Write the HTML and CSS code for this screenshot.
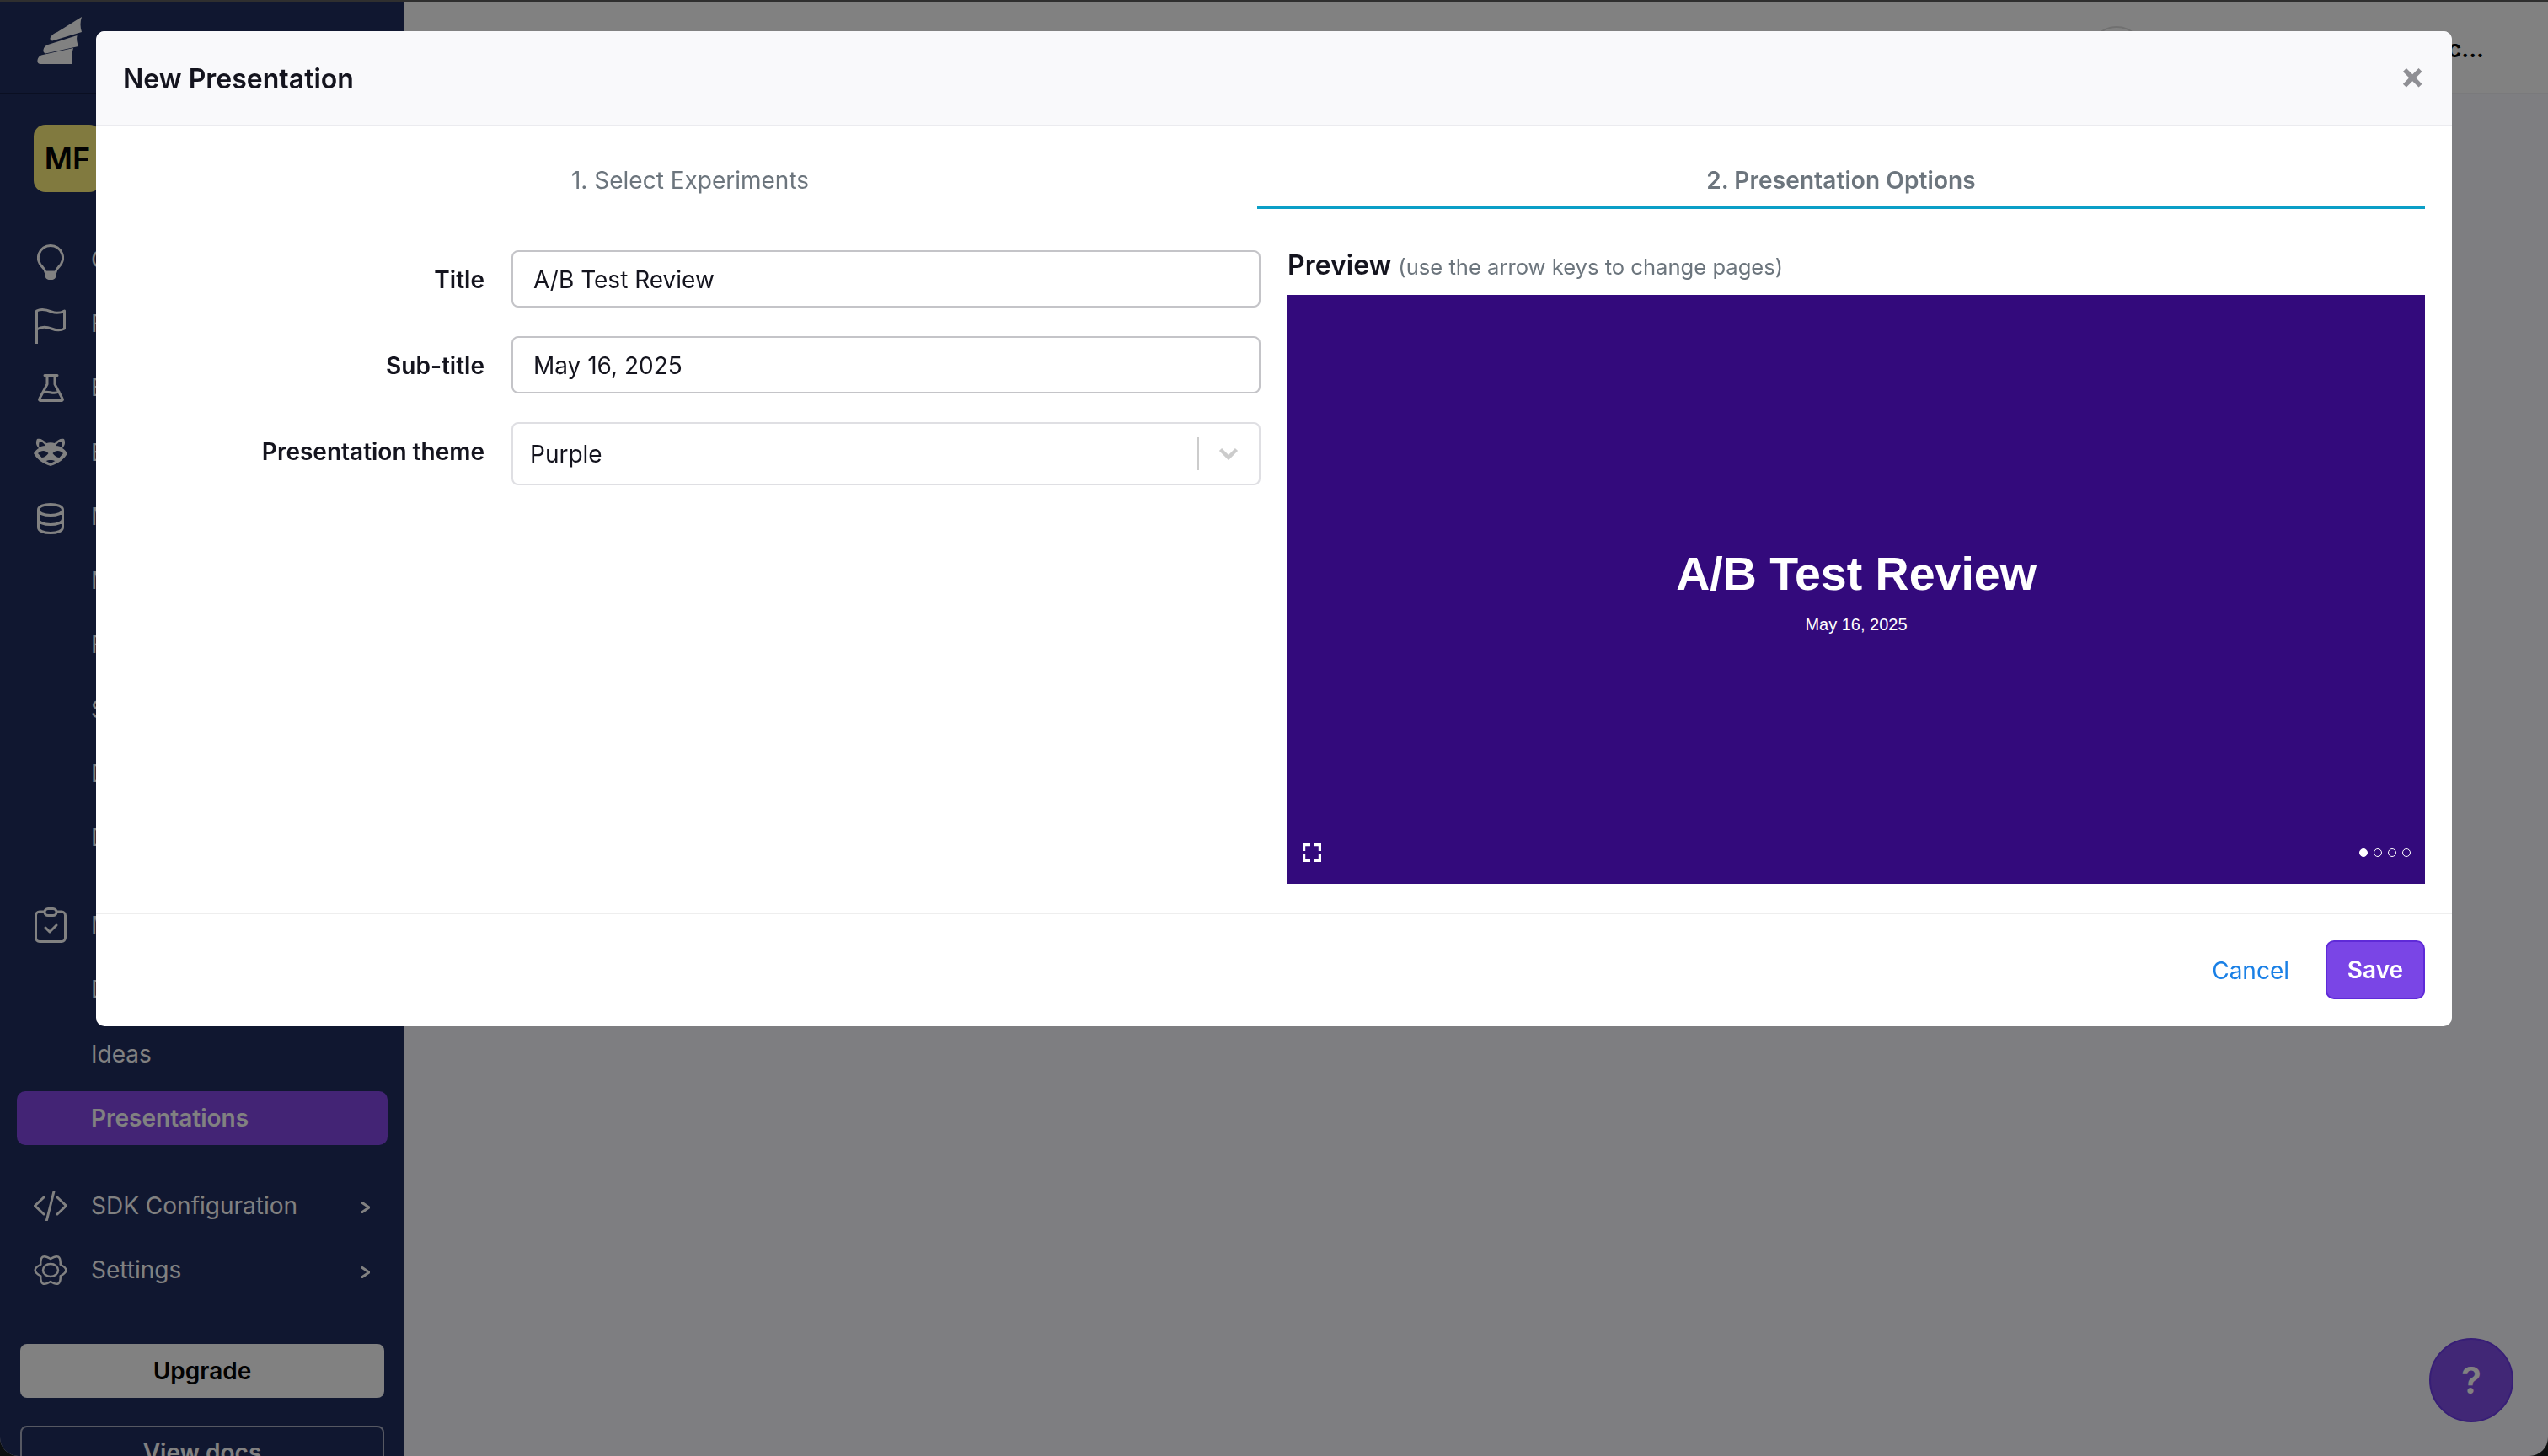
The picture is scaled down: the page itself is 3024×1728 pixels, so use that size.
FILE: index.html
```html
<!DOCTYPE html>
<html lang="en">
<head>
<meta charset="utf-8">
<title>New Presentation</title>
<link rel="stylesheet" href="styles.css">
</head>
<body>
<div class="app">
  <aside class="sidebar">
    <div class="side-head">
      <svg class="logo" viewBox="0 0 53 56"><path d="M16 24C18 21 21 19 24 18L53 0C51 6 51 12 53 18L18 28.5C15.500 28 15 26 16 24Z"/><path d="M7.500 39C8 36 10 34 13 33L47.500 22C46.500 26 47.500 31 49 35L10 43.500C8 43 7 41 7.500 39Z"/><path d="M1 49.500C2 47 4 45.500 7 45L43 37C41 43 41 50 42 56H4C0 56 0 52 1 49.500Z"/></svg>
    </div>
    <div class="org-badge">MF</div>
    <nav class="nav">
      <a class="row"><span class="ico"><svg class="nudge" width="32" height="42" viewBox="0 0 32 42"><path class="ln" d="M16 1.500A14.500 14.500 0 0 0 6.500 27C8.500 29 9.500 30.500 10 33H22C22.500 30.500 23.500 29 25.500 27A14.500 14.500 0 0 0 16 1.500Z"/><path class="fl" d="M9.500 33H22.500V37C22.500 40 20 42 17 42H15C12 42 9.500 40 9.500 37Z"/></svg></span><span>Get Started</span></a>
      <a class="row"><span class="ico"><svg class="nudge" width="36" height="42" viewBox="0 0 36 42"><path class="ln" d="M1.500 42V3C8 0 14 2 19 4C24 6 29 6 34.500 3V24C29 27 24 26 19 24C14 22 8 21 1.500 25"/></svg></span><span>Features</span></a>
      <a class="row"><span class="ico"><svg width="31" height="33" viewBox="0 0 31 33"><path class="ln" d="M8 1.500H23M11 1.500V12L2 29C1 30.500 2 31.500 3.500 31.500H27.500C29 31.500 30 30.500 29 29L20 12V1.500M6 22C12 19 18 25 25 21"/></svg></span><span>Experiments</span></a>
      <a class="row"><span class="ico"><svg width="40" height="33" viewBox="0 0 40 33"><path class="fl" d="M0 18C2 15 4 13 6 12C3 9 2 5 4 1C8 0 12 2 15 6C18 5 22 5 25 6C28 2 32 0 36 1C38 5 37 9 34 12C36 13 38 15 40 18C37 24 30 30 20 33C10 30 3 24 0 18Z"/><path class="mask" d="M7 4C10 4 12 6 14 9C10 9 8 10 6.500 11C6 9 6 6 7 4ZM33 4C30 4 28 6 26 9C30 9 32 10 33.500 11C34 9 34 6 33 4ZM5 18C9 14 14 14 17.500 18C15.500 21 12 23 9.500 23ZM35 18C31 14 26 14 22.500 18C24.500 21 28 23 30.500 23ZM14.500 27C17 25.500 23 25.500 25.500 27L20 30Z"/></svg></span><span>Bandits</span></a>
      <a class="row"><span class="ico"><svg class="nudge" width="32" height="37" viewBox="0 0 32 37"><path class="ln" d="M1.500 8C1.500 4 8 1.500 16 1.500S30.500 4 30.500 8V29C30.500 33 24 35.500 16 35.500S1.500 33 1.500 29ZM1.500 8C1.500 12 8 14.500 16 14.500S30.500 12 30.500 8M1.500 19C1.500 23 8 25.500 16 25.500S30.500 23 30.500 19"/></svg></span><span>Metrics and Data</span></a>
      <a class="row"><span class="ico"></span><span>Metrics</span></a>
      <a class="row"><span class="ico"></span><span>Fact Tables</span></a>
      <a class="row"><span class="ico"></span><span>Segments</span></a>
      <a class="row"><span class="ico"></span><span>Dimensions</span></a>
      <a class="row"><span class="ico"></span><span>Data Sources</span></a>
      <a class="row group-start"><span class="ico"><svg width="38" height="42" viewBox="0 0 38 42"><path class="ln" d="M11 5H6C3.500 5 1.500 7 1.500 9.500V36C1.500 38.500 3.500 40.500 6 40.500H32C34.500 40.500 36.500 38.500 36.500 36V9.500C36.500 7 34.500 5 32 5H27"/><rect class="ln" x="12" y="1.500" width="14" height="8" rx="4"/><path class="ln" d="M13 24L18 29L26 21"/></svg></span><span>Management</span></a>
      <a class="row"><span class="ico"></span><span>Dashboards</span></a>
      <a class="row"><span class="ico"></span><span>Ideas</span></a>
      <a class="row active"><span class="ico"></span><span>Presentations</span></a>
      <a class="row group-start"><span class="ico"><svg width="40" height="36" viewBox="0 0 40 36"><path class="ln" d="M12 8L1.500 18L12 28M28 8L38.500 18L28 28M24 1L15.500 35"/></svg></span><span>SDK Configuration</span><svg class="chev" width="10" height="14" viewBox="0 0 10 14"><path class="ln" d="M1 1.500L9 7L1 12.500"/></svg></a>
      <a class="row"><span class="ico"><svg width="40" height="37" viewBox="0 0 40 37"><path class="ln thin" d="M31.700 11.750Q45 18.500 31.700 25.250Q32.500 40 20 32Q7.500 40 8.300 25.250Q-5 18.500 8.300 11.750Q7.500 -3 20 5Q32.500 -3 31.700 11.750Z"/><ellipse class="ln thin" cx="20" cy="18.500" rx="9" ry="7.500"/></svg></span><span>Settings</span><svg class="chev" width="10" height="14" viewBox="0 0 10 14"><path class="ln" d="M1 1.500L9 7L1 12.500"/></svg></a>
    </nav>
    <div class="side-actions">
      <button class="btn-upgrade">Upgrade</button>
      <button class="btn-docs">View docs</button>
    </div>
  </aside>
  <main class="main">
    <header class="topbar">
      <span class="avatar"></span>
      <span class="org-name">Growth Inc...</span>
    </header>
  </main>
  <button class="help">?</button>
</div>

<div class="backdrop"></div>

<section class="modal">
  <header class="modal-head">
    <h2 class="modal-title">New Presentation</h2>
    <button class="close">×</button>
  </header>
  <div class="tabs">
    <div class="tab tab-first">1. Select Experiments</div>
    <div class="tab tab-current">2. Presentation Options</div>
  </div>
  <div class="modal-body">
    <form class="form">
      <label class="field-label">Title</label>
      <input class="text-input" type="text" value="A/B Test Review">
      <label class="field-label">Sub-title</label>
      <input class="text-input" type="text" value="May 16, 2025">
      <label class="field-label">Presentation theme</label>
      <div class="select">
        <span class="select-value">Purple</span>
        <span class="select-sep"></span>
        <svg class="select-arrow" width="24" height="15" viewBox="0 0 24 15"><path d="M2.500 2.500L12 12L21.500 2.500"/></svg>
      </div>
    </form>
    <div class="preview">
      <div class="preview-head"><span class="preview-name">Preview</span> <span class="preview-hint">(use the arrow keys to change pages)</span></div>
      <div class="slide">
        <div class="slide-title">A/B Test Review</div>
        <div class="slide-sub">May 16, 2025</div>
        <svg class="slide-full" width="22" height="22" viewBox="0 0 22 22"><path d="M1.500 9V1.500H9M13 1.500H20.500V9M20.500 13V20.500H13M9 20.500H1.500V13"/></svg>
        <div class="dots"><i class="dot on"></i><i class="dot"></i><i class="dot"></i><i class="dot"></i></div>
      </div>
    </div>
  </div>
  <footer class="modal-foot">
    <button class="cancel">Cancel</button>
    <button class="save">Save</button>
  </footer>
</section>
</body>
</html>
```
FILE: styles.css
```css
* { box-sizing: border-box; }
html, body { margin: 0; height: 1728px; overflow: hidden; background: #141b1d; }
body { font-family: Inter, "Noto Sans", sans-serif; font-size: 28px; color: #14141e; }
button { font: inherit; cursor: pointer; }

.app { display: flex; height: 1728px; border-top: 2px solid #5a5a5a; border-radius: 0 0 22px 22px; overflow: hidden; background: #f9f9ff; }

.sidebar { width: 480px; flex: none; background: #1c2a5c; color: #fff; display: flex; flex-direction: column; }
.side-head { height: 110px; flex: none; padding: 18px 0 0 44px; border-bottom: 2px solid #101a40; }
.logo { display: block; width: 53px; height: 56px; fill: #fff; }
.org-badge { width: 80px; height: 80px; margin: 36px 0 0 40px; border-radius: 14px; background: #fff07a; color: #000; font-weight: 600; font-size: 36px; display: flex; align-items: center; justify-content: center; flex: none; }
.nav { margin-top: 48px; padding: 0 20px; display: flex; flex-direction: column; gap: 13px; }
.row { height: 63.300px; padding: 0 21px 0 20px; border-radius: 10px; display: flex; align-items: center; gap: 28px; white-space: nowrap; flex: none; }
.group-start { margin-top: 27.500px; }
.active { background: #8244e6; font-weight: 600; }
.ico { width: 40px; height: 44px; flex: none; display: flex; align-items: center; justify-content: center; }
.nudge { margin-top: 6px; }
.ln { fill: none; stroke: #fff; stroke-width: 3; stroke-linecap: round; stroke-linejoin: round; }
.thin { stroke-width: 2.500; }
.fl { fill: #fff; }
.mask { fill: #1c2a5c; }
.chev { margin-left: auto; margin-top: 5px; flex: none; }

.side-actions { margin-top: 56px; padding: 0 24px; display: flex; flex-direction: column; gap: 33px; }
.btn-upgrade { height: 64px; flex: none; border: 0; border-radius: 8px; background: #fff; color: #000; font-weight: 600; }
.btn-docs { height: 64px; flex: none; border: 2px solid #a9adc0; border-radius: 8px; background: transparent; color: #fff; font-weight: 600; }

.main { flex: 1; min-width: 0; }
.topbar { height: 110px; background: #fff; border-bottom: 2px solid #f0f0f4; display: flex; align-items: flex-start; justify-content: flex-end; padding: 29px 76px 0 0; gap: 229px; }
.avatar { width: 66px; height: 66px; border-radius: 50%; border: 2px solid #ddd; flex: none; }
.org-name { color: #000; font-weight: 600; line-height: 54px; white-space: nowrap; }

.help { position: absolute; left: 2883px; top: 1588px; width: 100px; height: 100px; border-radius: 50%; background: #7e4ae8; border: 2px solid #6a38e8; color: #fff; font-size: 44px; font-weight: 600; padding: 0; display: flex; align-items: center; justify-content: center; }

.backdrop { position: fixed; inset: 0; background: rgba(4, 4, 4, 0.5); }

.modal { position: fixed; left: 114px; top: 37px; width: 2796px; height: 1181px; background: #fff; border-radius: 10px; overflow: hidden; display: flex; flex-direction: column; }
.modal-head { height: 113px; flex: none; background: #f9f9fb; border-bottom: 2px solid #ebebef; padding: 2px 32px 0; display: flex; align-items: center; justify-content: space-between; }
.modal-title { margin: 0; font-size: 32px; font-weight: 600; line-height: 1; color: #14141e; }
.close { border: 0; background: none; padding: 0; margin-bottom: 9px; color: #8f8f94; font-size: 44px; font-weight: 700; line-height: 1; }

.tabs { margin: 43px 32px 0; display: flex; flex: none; }
.tab { height: 55px; line-height: 42px; text-align: center; color: #6c757d; }
.tab-first { width: 1346px; }
.tab-current { width: 1386px; font-weight: 600; letter-spacing: 0.100px; border-bottom: 4px solid #0b9fc7; }

.modal-body { flex: 1; min-height: 0; margin-top: 49px; padding: 0 32px 34px; display: flex; gap: 32px; border-bottom: 2px solid #eeeeee; }
.form { width: 1350px; flex: none; display: grid; grid-template-columns: 429px 889px; column-gap: 32px; row-gap: 34px; grid-auto-rows: min-content; align-items: start; }
.field-label { height: 68px; font-weight: 600; text-align: right; line-height: 70px; }
.text-input { height: 68px; width: 100%; padding: 2px 24px 0; border: 2px solid #c4c4c8; border-radius: 8px; font: inherit; color: #14141e; outline: 0; background: #fff; }
.select { height: 75px; border: 2px solid #dfdfe3; border-radius: 8px; display: flex; align-items: center; padding: 0 0 0 20px; }
.select-value { flex: 1; }
.select-sep { width: 2px; height: 39px; background: #cccccc; }
.select-arrow { margin: 0 24px 0 23px; flex: none; fill: none; stroke: #cccccc; stroke-width: 4.500; }

.preview { width: 1350px; flex: none; display: flex; flex-direction: column; }
.preview-head { height: 53px; flex: none; line-height: 36px; color: #6c757d; }
.preview-name { font-size: 32px; font-weight: 600; color: #14141e; }
.preview-hint { font-size: 25.600px; }
.slide { position: relative; height: 699px; flex: none; background: #330a7c; color: #fff; font-family: "Liberation Sans", Arial, sans-serif; display: flex; flex-direction: column; align-items: center; justify-content: center; padding-top: 4px; }
.slide-title { font-size: 55.500px; font-weight: 700; line-height: 60px; }
.slide-sub { font-size: 20px; line-height: 24px; margin-top: 18px; }
.slide-full { position: absolute; left: 18px; bottom: 26px; fill: none; stroke: #fff; stroke-width: 3.400; }
.dots { position: absolute; right: 17px; bottom: 32px; display: flex; gap: 7px; }
.dot { width: 10px; height: 10px; border-radius: 50%; border: 1.500px solid #fff; }
.dot.on { background: #fff; }

.modal-foot { height: 133px; flex: none; display: flex; align-items: center; justify-content: flex-end; gap: 43px; padding: 0 32px 1px; }
.cancel { border: 0; background: none; padding: 1px 0 0; color: #1a80e6; }
.save { width: 118px; height: 70px; padding: 0; background: #7a45e6; border: 2px solid #5f2ad8; border-radius: 10px; color: #fff; font-weight: 600; }
```
